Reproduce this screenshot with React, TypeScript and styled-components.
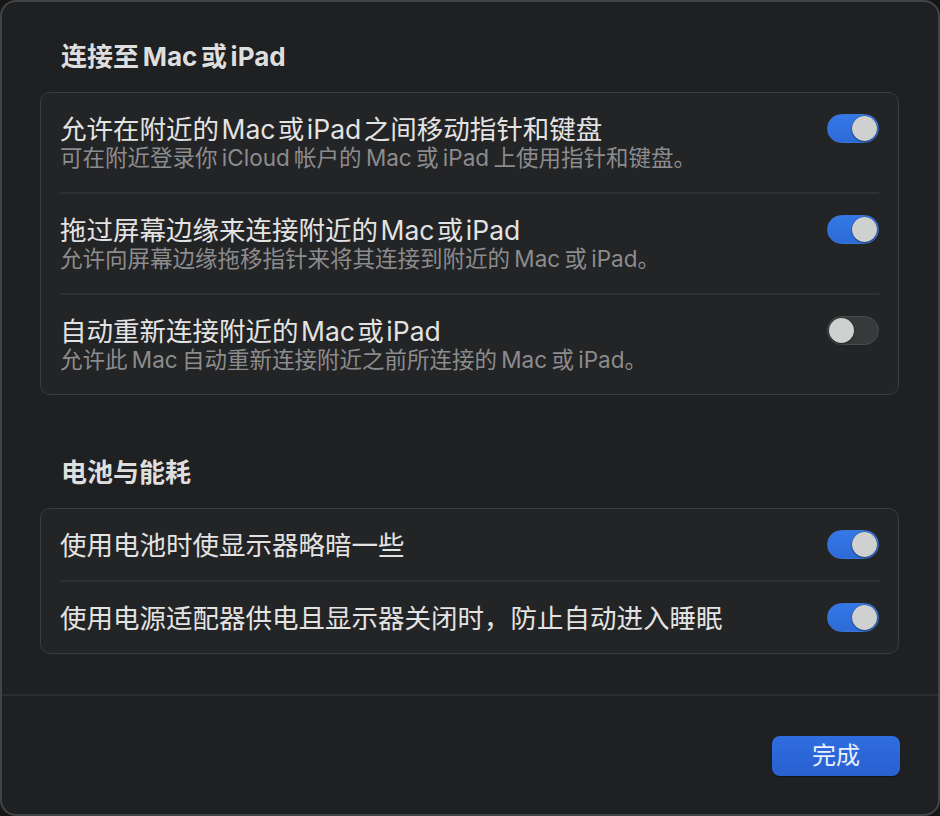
import React, { useState } from "react";
import styled, { createGlobalStyle } from "styled-components";

const GlobalStyle = createGlobalStyle`
  html, body {
    margin: 0;
    padding: 0;
    background: #161617;
  }
  body {
    font-family: "Inter", "Noto Sans CJK SC", sans-serif;
    -webkit-font-smoothing: antialiased;
  }
`;

const Window = styled.div`
  box-sizing: border-box;
  width: 940px;
  height: 816px;
  background: #1f2022;
  border: 2px solid #434446;
  border-radius: 16px;
  display: flex;
  flex-direction: column;
  overflow: hidden;
`;

const Body = styled.div`
  flex: 1;
  padding: 38px 39px 0 38px;
  display: flex;
  flex-direction: column;
`;

const SectionTitle = styled.h2<{ $first?: boolean }>`
  margin: ${(p) => (p.$first ? "0" : "61px")} 0 18px 21px;
  font-size: 26px;
  line-height: 34px;
  font-weight: 700;
  word-spacing: -2.5px;
  color: #dedede;
`;

const Card = styled.div`
  background: #232425;
  border: 1px solid #3a3b3d;
  border-radius: 10px;
  padding: 0 19px;
`;

const Row = styled.div<{ $last?: boolean; $sub?: boolean }>`
  display: flex;
  align-items: flex-start;
  justify-content: space-between;
  padding: ${(p) => (p.$sub ? "21px 0 20px" : "21px 0 20px")};
  border-bottom: ${(p) => (p.$last ? "none" : "2px solid #2f3032")};
`;

const Texts = styled.div`
  display: flex;
  flex-direction: column;
`;

const RowTitle = styled.div`
  font-size: 26.5px;
  line-height: 30px;
  word-spacing: -5px;
  color: #e3e3e3;
`;

const RowSub = styled.div`
  font-size: 22.5px;
  line-height: 28px;
  word-spacing: -2px;
  color: #8c8c8e;
`;

const Track = styled.button<{ $on: boolean }>`
  box-sizing: border-box;
  flex-shrink: 0;
  width: 52px;
  height: 29px;
  margin-top: 0;
  border-radius: 15px;
  padding: 1px;
  cursor: pointer;
  display: flex;
  justify-content: ${(p) => (p.$on ? "flex-end" : "flex-start")};
  align-items: center;
  background: ${(p) =>
    p.$on ? "linear-gradient(#3478e6, #2d6bd6)" : "#38393b"};
  border: 1px solid ${(p) => (p.$on ? "#3a74d4" : "#4a4b4d")};
`;

const Knob = styled.span`
  width: 25px;
  height: 25px;
  border-radius: 50%;
  background: #cfd0d0;
  box-shadow: 0 0 1px rgba(0, 0, 0, 0.6), 0 1px 2px rgba(0, 0, 0, 0.35);
`;

const Footer = styled.div`
  border-top: 2px solid #2b2c2e;
  padding: 40px 38px 38px 0;
  display: flex;
  justify-content: flex-end;
`;

const DoneButton = styled.button`
  width: 128px;
  height: 40px;
  border: none;
  border-radius: 8px;
  background: linear-gradient(#2f6de0, #2860cf);
  box-shadow: 0 1px 1px rgba(0, 0, 0, 0.4);
  color: #eaf0fc;
  font-family: "Inter", "Noto Sans CJK SC", sans-serif;
  font-size: 24px;
  line-height: 40px;
  padding: 0;
  cursor: pointer;
`;

type Item = { title: string; sub?: string; on: boolean };

const Toggle = ({ initial }: { initial: boolean }) => {
  const [on, setOn] = useState(initial);
  return (
    <Track $on={on} onClick={() => setOn(!on)}>
      <Knob />
    </Track>
  );
};

const Section = ({ title, items, first }: { title: string; items: Item[]; first?: boolean }) => (
  <>
    <SectionTitle $first={first}>{title}</SectionTitle>
    <Card>
      {items.map((it, i) => (
        <Row key={i} $last={i === items.length - 1} $sub={!!it.sub}>
          <Texts>
            <RowTitle>{it.title}</RowTitle>
            {it.sub && <RowSub>{it.sub}</RowSub>}
          </Texts>
          <Toggle initial={it.on} />
        </Row>
      ))}
    </Card>
  </>
);

const connect: Item[] = [
  {
    title: "允许在附近的 Mac 或 iPad 之间移动指针和键盘",
    sub: "可在附近登录你 iCloud 帐户的 Mac 或 iPad 上使用指针和键盘。",
    on: true,
  },
  {
    title: "拖过屏幕边缘来连接附近的 Mac 或 iPad",
    sub: "允许向屏幕边缘拖移指针来将其连接到附近的 Mac 或 iPad。",
    on: true,
  },
  {
    title: "自动重新连接附近的 Mac 或 iPad",
    sub: "允许此 Mac 自动重新连接附近之前所连接的 Mac 或 iPad。",
    on: false,
  },
];

const battery: Item[] = [
  { title: "使用电池时使显示器略暗一些", on: true },
  { title: "使用电源适配器供电且显示器关闭时，防止自动进入睡眠", on: true },
];

export default function App() {
  return (
    <>
      <GlobalStyle />
      <Window>
        <Body>
          <Section first title="连接至 Mac 或 iPad" items={connect} />
          <Section title="电池与能耗" items={battery} />
        </Body>
        <Footer>
          <DoneButton>完成</DoneButton>
        </Footer>
      </Window>
    </>
  );
}
